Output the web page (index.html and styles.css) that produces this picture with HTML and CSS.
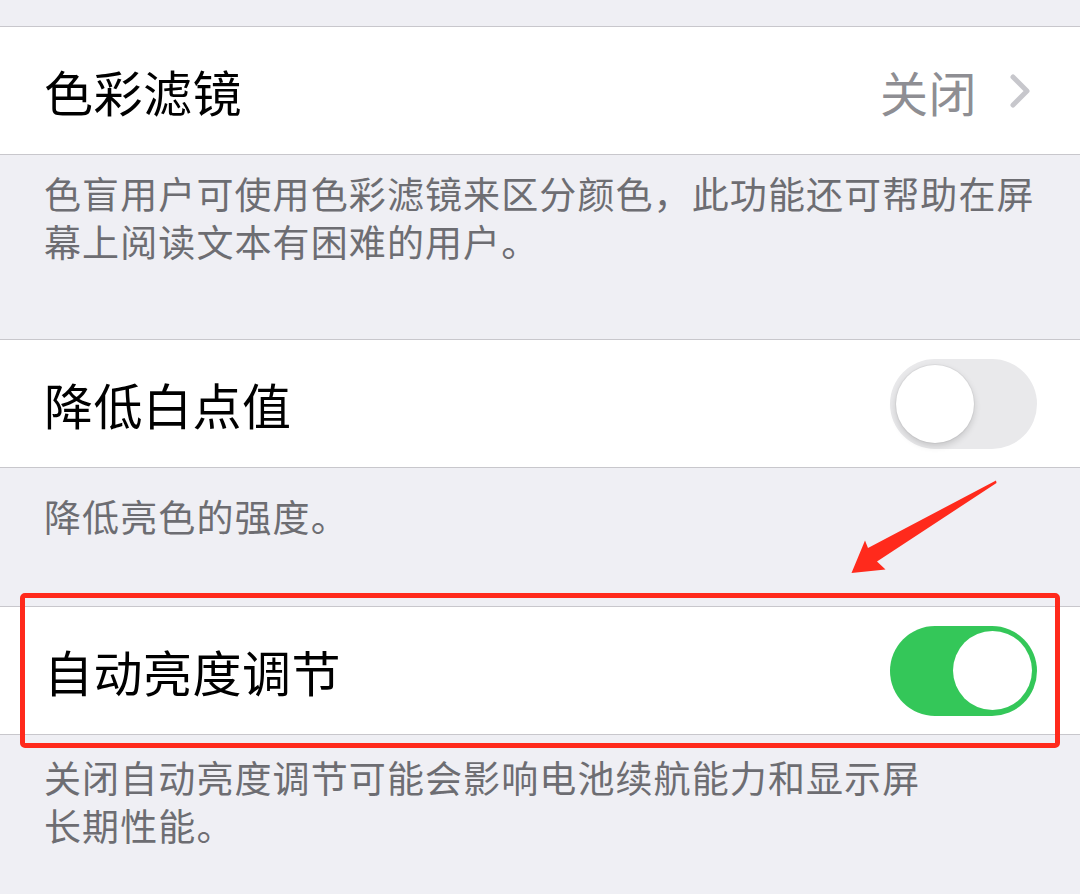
FILE: index.html
```html
<!DOCTYPE html>
<html lang="zh-CN">
<head>
<meta charset="utf-8">
<title>显示调节</title>
<link rel="stylesheet" href="styles.css">
</head>
<body>
<div class="page">
  <div class="cell">
    <span class="label">色彩滤镜</span>
    <span class="detail">
      <span class="value">关闭</span>
      <svg class="chevron" width="22" height="36" viewBox="0 0 22 36"><polyline points="4,4 18,18 4,32" fill="none" stroke="#c7c7cc" stroke-width="5" stroke-linecap="round" stroke-linejoin="round"/></svg>
    </span>
  </div>
  <div class="footer footer-1">色盲用户可使用色彩滤镜来区分颜色，此功能还可帮助在屏<br>幕上阅读文本有困难的用户。</div>

  <div class="cell">
    <span class="label">降低白点值</span>
    <span class="switch"><span class="knob"></span></span>
  </div>
  <div class="footer footer-2">降低亮色的强度。</div>

  <div class="cell">
    <span class="label">自动亮度调节</span>
    <span class="switch on"><span class="knob"></span></span>
  </div>
  <div class="footer footer-3">关闭自动亮度调节可能会影响电池续航能力和显示屏<br>长期性能。</div>

  <div class="highlight"></div>
  <svg class="arrow" width="1080" height="894" viewBox="0 0 1080 894">
    <polygon points="996,480.5 868,548 865,540.5 851.5,573 885.5,569.5 877,561.5 996.5,483" fill="#ff2a1c"/>
  </svg>
</div>
</body>
</html>
```

FILE: styles.css
```css
html, body {
  margin: 0;
  padding: 0;
}

body {
  background: #efeff4;
  font-family: "Noto Sans CJK SC", "Noto Sans", sans-serif;
  width: 1080px;
  height: 894px;
  overflow: hidden;
}

.page {
  position: relative;
  padding-top: 26px;
  height: 894px;
  box-sizing: border-box;
}

.cell {
  box-sizing: border-box;
  height: 129px;
  background: #ffffff;
  border-top: 1px solid #c8c7cc;
  border-bottom: 1px solid #c8c7cc;
  display: flex;
  align-items: center;
  justify-content: space-between;
  padding: 0 43px 0 44px;
}

.label {
  font-size: 49px;
  letter-spacing: 0.5px;
  color: #000000;
  line-height: 1;
}

.detail {
  display: flex;
  align-items: center;
  margin-right: 6px;
}

.value {
  font-size: 48px;
  letter-spacing: 0.5px;
  color: #8e8e93;
  line-height: 1;
  margin-right: 32px;
}

.chevron {
  display: block;
}

.footer {
  box-sizing: border-box;
  padding: 0 44px;
  font-size: 37px;
  letter-spacing: 1.1px;
  line-height: 48px;
  color: #6d6d72;
  white-space: nowrap;
}

.footer-1 {
  height: 184px;
  padding-top: 14px;
}

.footer-2 {
  height: 138px;
  padding-top: 24px;
}

.footer-3 {
  padding-top: 18px;
}

.switch {
  box-sizing: border-box;
  width: 147px;
  height: 90px;
  border-radius: 45px;
  background: #e9e9eb;
  display: flex;
  align-items: center;
  justify-content: flex-start;
  padding: 0 6px;
}

.switch .knob {
  width: 78px;
  height: 78px;
  border-radius: 50%;
  background: #ffffff;
  box-shadow: 0 3px 7px rgba(0, 0, 0, 0.16), 0 0 0 1px rgba(0, 0, 0, 0.04);
}

.switch.on {
  background: #34c759;
  justify-content: flex-end;
  padding: 0 5px;
}

.switch.on .knob {
  width: 79px;
  height: 79px;
  box-shadow: none;
}

.highlight {
  position: absolute;
  left: 20px;
  top: 593px;
  width: 1040px;
  height: 155px;
  box-sizing: border-box;
  border: 5px solid #ff2a1c;
  border-radius: 5px;
  pointer-events: none;
}

.arrow {
  position: absolute;
  left: 0;
  top: 0;
  pointer-events: none;
}
```
